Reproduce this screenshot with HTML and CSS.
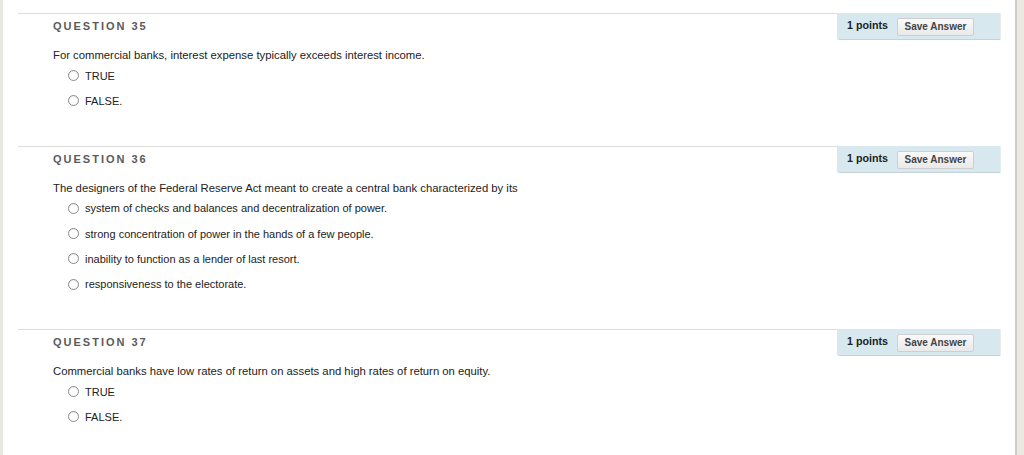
FILE: index.html
```html
<!DOCTYPE html>
<html>
<head>
<meta charset="utf-8">
<link rel="stylesheet" href="styles.css">
</head>
<body>
<div class="page">
  <div class="left-edge"></div>
  <main class="content">
    <section class="question">
      <div class="q-head">
        <h3 class="q-title">QUESTION 35</h3>
        <div class="q-panel">
          <span class="points">1 points</span>
          <button class="save">Save Answer</button>
        </div>
      </div>
      <p class="q-text">For commercial banks, interest expense typically exceeds interest income.</p>
      <ul class="options">
        <li class="option"><span class="radio"></span>TRUE</li>
        <li class="option"><span class="radio"></span>FALSE.</li>
      </ul>
    </section>
    <section class="question">
      <div class="q-head">
        <h3 class="q-title">QUESTION 36</h3>
        <div class="q-panel">
          <span class="points">1 points</span>
          <button class="save">Save Answer</button>
        </div>
      </div>
      <p class="q-text">The designers of the Federal Reserve Act meant to create a central bank characterized by its</p>
      <ul class="options">
        <li class="option"><span class="radio"></span>system of checks and balances and decentralization of power.</li>
        <li class="option"><span class="radio"></span>strong concentration of power in the hands of a few people.</li>
        <li class="option"><span class="radio"></span>inability to function as a lender of last resort.</li>
        <li class="option"><span class="radio"></span>responsiveness to the electorate.</li>
      </ul>
    </section>
    <section class="question">
      <div class="q-head">
        <h3 class="q-title">QUESTION 37</h3>
        <div class="q-panel">
          <span class="points">1 points</span>
          <button class="save">Save Answer</button>
        </div>
      </div>
      <p class="q-text">Commercial banks have low rates of return on assets and high rates of return on equity.</p>
      <ul class="options">
        <li class="option"><span class="radio"></span>TRUE</li>
        <li class="option"><span class="radio"></span>FALSE.</li>
      </ul>
    </section>
  </main>
  <div class="right-edge"></div>
</div>
</body>
</html>
```
FILE: styles.css
```css
html, body {
  margin: 0;
  padding: 0;
  background: #ffffff;
  font-family: "Liberation Sans", Arial, Helvetica, sans-serif;
  color: #222;
}
.page {
  display: flex;
  height: 455px;
  overflow: hidden;
}
.left-edge {
  width: 3px;
  flex: none;
  background: #e8e7e2;
}
.content {
  flex: 1;
  padding: 13px 14px 0 15px;
  background: #fff;
}
.right-edge {
  width: 7px;
  flex: none;
  border-left: 2px solid #cfcdc8;
  background: #ece9e2;
}
.question {
  padding-bottom: 32px;
}
.q-head {
  display: flex;
  height: 27px;
}
.q-title {
  flex: 1;
  margin: 0;
  box-sizing: border-box;
  height: 27px;
  border-top: 1px solid #dcdcdc;
  padding: 5px 0 0 35px;
  font-size: 11px;
  line-height: 14px;
  font-weight: bold;
  letter-spacing: 2px;
  color: #5a5a5a;
}
.q-panel {
  flex: none;
  width: 164px;
  box-sizing: border-box;
  height: 27px;
  background: #d7e9ee;
  border-bottom: 1px solid #c3d3d8;
  border-right: 1px solid #e4eff2;
  border-bottom-left-radius: 3px;
  display: flex;
  align-items: flex-start;
  padding: 5px 0 0 10px;
  gap: 9px;
}
.points {
  font-size: 10.7px;
  line-height: 14px;
  font-weight: bold;
  color: #222;
}
.save {
  margin: 0;
  height: 18px;
  width: 77px;
  padding: 0;
  border: 1px solid #cfcfcf;
  border-radius: 2px;
  background: linear-gradient(#fafafa, #e9e9e9);
  font-family: "Liberation Sans", Arial, Helvetica, sans-serif;
  font-size: 10px;
  font-weight: bold;
  color: #444;
  line-height: 16px;
}
.q-text {
  margin: 8px 0 0 35px;
  font-size: 11.3px;
  line-height: 15px;
  height: 15px;
}
.options {
  list-style: none;
  margin: 0;
  padding: 0 0 0 50px;
}
.option {
  display: flex;
  align-items: center;
  height: 25.33px;
  font-size: 11px;
  color: #222;
}
.radio {
  display: inline-block;
  box-sizing: border-box;
  width: 11px;
  height: 11px;
  border: 1px solid #8a8a8a;
  border-radius: 50%;
  background: #fff;
  margin-right: 6px;
  box-shadow: inset 0 1px 1px rgba(0,0,0,0.08);
}
```
